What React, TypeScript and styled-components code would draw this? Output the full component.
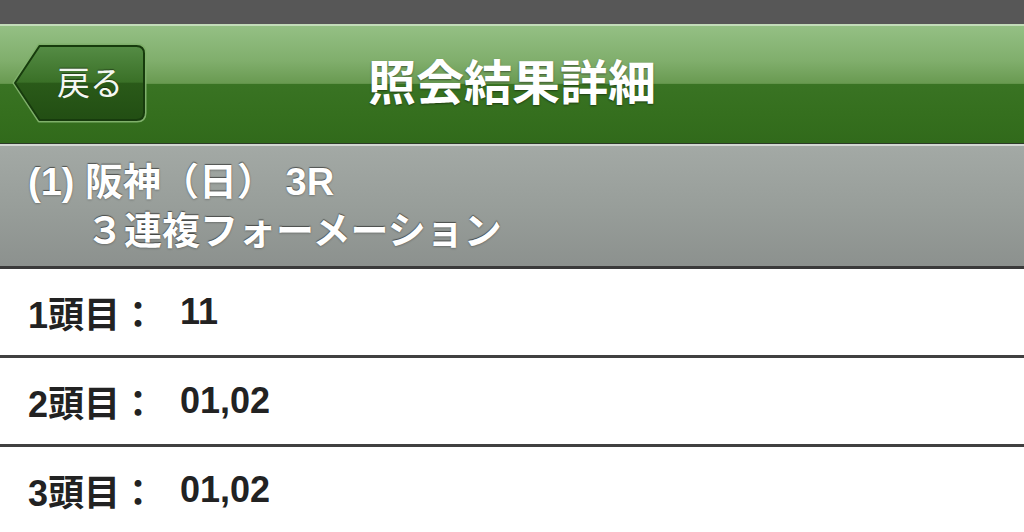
import * as React from "react";
import styled, {createGlobalStyle} from "styled-components";

const GlobalStyle = createGlobalStyle`
    html, body {
        margin: 0;
        padding: 0;
        background: #ffffff;
    }
    body {
        width: 1024px;
        height: 532px;
        overflow: hidden;
        font-family: "Liberation Sans", "Noto Sans CJK JP", sans-serif;
    }
`

interface Pick {
    label: string
    value: string
}

const picks: Pick[] = [
    {label: "1頭目：", value: "11"},
    {label: "2頭目：", value: "01,02"},
    {label: "3頭目：", value: "01,02"},
];

export default class App extends React.Component {
    render() {
        return <Page>
            <GlobalStyle/>
            <StatusBar/>
            <NavBar>
                <NavSide>
                    <BackButton>
                        <BackShape width="136" height="82" viewBox="0 0 136 82">
                            <defs>
                                <linearGradient id="backFill" x1="0" y1="0" x2="0" y2="1">
                                    <stop offset="0" stopColor="#558c45"/>
                                    <stop offset="0.49" stopColor="#3a7027"/>
                                    <stop offset="0.5" stopColor="#2a5a19"/>
                                    <stop offset="1" stopColor="#224e13"/>
                                </linearGradient>
                            </defs>
                            <path d="M2 41 L27 3 H125 Q133 3 133 11 V71 Q133 79 125 79 H27 Z"
                                  fill="none" stroke="#7fb06a" strokeWidth="3" strokeLinejoin="round"/>
                            <path d="M3 41 L27.5 4 H124.5 Q132 4 132 11.5 V70.5 Q132 78 124.5 78 H27.5 Z"
                                  fill="url(#backFill)" stroke="#173b0d" strokeWidth="2" strokeLinejoin="round"/>
                        </BackShape>
                        <BackLabel>戻る</BackLabel>
                    </BackButton>
                </NavSide>
                <NavTitle>照会結果詳細</NavTitle>
                <NavSide/>
            </NavBar>
            <RaceHeader>
                <RaceLine>(1) 阪神（日） 3R</RaceLine>
                <RaceLine indent>３連複フォーメーション</RaceLine>
            </RaceHeader>
            {picks.map(p => <PickRow key={p.label}>
                <PickLabel>{p.label}</PickLabel>
                <PickValue>{p.value}</PickValue>
            </PickRow>)}
        </Page>
    }
}

const Page = styled.div`
    display: flex;
    flex-direction: column;
    width: 1024px;
    height: 532px;
    overflow: hidden;
    background: #ffffff;
`

const StatusBar = styled.div`
    flex: 0 0 auto;
    height: 24px;
    background: #575757;
`

const NavBar = styled.div`
    flex: 0 0 auto;
    display: grid;
    grid-template-columns: 1fr auto 1fr;
    align-items: center;
    height: 117px;
    border-top: 2px solid #c3dcb9;
    border-bottom: 1px solid #2c3a28;
    background: linear-gradient(to bottom, #94c084 0%, #80ae6c 30%, #699a51 49%, #397323 50%, #356f1e 75%, #316a1b 100%);
`

const NavSide = styled.div`
    display: flex;
    align-items: center;
`

const BackButton = styled.div`
    position: relative;
    display: flex;
    align-items: center;
    width: 136px;
    height: 82px;
    margin-left: 12px;
    margin-top: -3px;
`

const BackShape = styled.svg`
    position: absolute;
    left: 0;
    top: 0;
`

const BackLabel = styled.span`
    position: relative;
    padding-left: 45px;
    padding-bottom: 4px;
    color: #f4f8f2;
    font-size: 33px;
    font-weight: 400;
    text-shadow: 0 -1px 1px rgba(0, 0, 0, 0.45);
`

const NavTitle = styled.div`
    color: #ffffff;
    font-size: 48px;
    font-weight: 700;
    line-height: 1;
    padding-bottom: 2px;
    text-shadow: 0 1px 2px rgba(0, 0, 0, 0.45);
`

const RaceHeader = styled.div`
    flex: 0 0 auto;
    display: flex;
    flex-direction: column;
    height: 125px;
    box-sizing: border-box;
    padding: 12px 0 0 28px;
    border-top: 2px solid #d3d7d3;
    border-bottom: 3px solid #3a3a3a;
    background: linear-gradient(to bottom, #a3a9a5 0%, #989e9a 50%, #8c918e 100%);
`

const RaceLine = styled.div<{indent?: boolean}>`
    height: 49px;
    line-height: 49px;
    margin-left: ${props => props.indent ? "58px" : "0"};
    color: #ffffff;
    font-size: 38px;
    font-weight: 700;
    white-space: pre;
    text-shadow: 0 -1px 1px rgba(0, 0, 0, 0.5), 0 1px 2px rgba(0, 0, 0, 0.25);
`

const PickRow = styled.div`
    flex: 0 0 auto;
    display: flex;
    align-items: center;
    height: 86px;
    padding-left: 28px;
    border-bottom: 3px solid #404040;
    background: #ffffff;
    color: #222222;
    font-size: 36px;
    font-weight: 700;
`

const PickLabel = styled.span`
    width: 152px;
    white-space: nowrap;
`

const PickValue = styled.span`
    white-space: nowrap;
`
